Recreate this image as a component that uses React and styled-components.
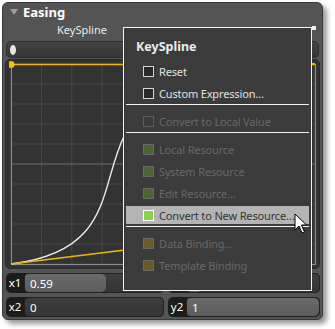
import styled, { createGlobalStyle } from 'styled-components'

const GlobalStyle = createGlobalStyle`
    body {
        margin: 0;
        background: #fff;
        font-family: "Noto Sans", "Liberation Sans", sans-serif;
    }
`

// panel
const Page = styled.div`
    position: relative;
    width: 335px;
    height: 329px;
    padding: 2px;
    box-sizing: border-box;
`
const Panel = styled.div`
    position: relative;
    width: 321px;
    height: 318px;
    box-sizing: border-box;
    padding: 1px 2px 0 2px;
    background: #545454;
    border: 1px solid #3a3a3a;
    border-radius: 6px;
    box-shadow: 4px 4px 5px rgba(0, 0, 0, 0.4);
`
const Header = styled.div`
    display: flex;
    align-items: center;
    gap: 5px;
    height: 16px;
    padding-left: 5px;
    color: #fff;
    font-size: 13px;
    font-weight: 700;
`
const Triangle = styled.span`
    width: 0;
    height: 0;
    border-left: 4px solid transparent;
    border-right: 4px solid transparent;
    border-top: 6px solid #9c9c9c;
`
const Caption = styled.div`
    width: 154px;
    height: 17px;
    line-height: 17px;
    margin-top: 1px;
    text-align: center;
    color: #e6ecf2;
    font-size: 11px;
`
const Track = styled.div`
    display: flex;
    align-items: center;
    height: 15px;
    margin: 3px 1px 0 1px;
    padding-left: 3px;
    background: linear-gradient(#434343, #363636);
    border: 1px solid #2f2f2f;
    border-radius: 5px;
`
const Thumb = styled.span`
    width: 6px;
    height: 10px;
    border-radius: 50%;
    background: #e6e6e6;
`
const GraphBox = styled.div`
    height: 210px;
    margin-top: 1px;
    padding: 1px 3px;
    box-sizing: border-box;
    background: #333;
    border: 1px solid #2a2a2a;
    border-radius: 5px;
`

// fields
const Fields = styled.div`
    display: grid;
    grid-template-columns: 158px 1fr;
    gap: 4px 4px;
    margin: 4px 0 0 1px;
`
const Field = styled.div`
    display: flex;
    height: 20px;
    background: #1c1c1c;
    border-radius: 5px;
    color: #fff;
    font-size: 11.5px;
`
const FieldLabel = styled.span`
    width: 18px;
    line-height: 20px;
    text-align: center;
`
const FieldBar = styled.div`
    position: relative;
    flex: 1;
    display: flex;
    align-items: center;
    padding-left: 5px;
    background: linear-gradient(#3d3d3d, #353535);
    border: 1px solid #222;
    border-radius: 5px;
    overflow: hidden;
`
const FieldFill = styled.span`
    position: absolute;
    left: 0;
    top: 0;
    bottom: 0;
    background: linear-gradient(#6a6a6a, #5c5c5c);
    border-radius: 0 5px 5px 0;
`
const FieldValue = styled.span`
    position: relative;
`

// context menu
const Menu = styled.div`
    position: absolute;
    left: 120px;
    top: 24px;
    width: 189px;
    height: 264px;
    box-sizing: border-box;
    display: flex;
    flex-direction: column;
    background: #3b3b3b;
    border: 1px solid #f2f2f2;
    font-size: 11px;
    letter-spacing: -0.15px;

    &::after {
        content: '';
        position: absolute;
        right: -5px;
        top: -2px;
        width: 4px;
        height: 4px;
        background: #f2f2f2;
    }
`
const MenuTitle = styled.div`
    height: 32px;
    box-sizing: border-box;
    padding: 10px 0 0 12px;
    color: #ececec;
    font-size: 12.5px;
    font-weight: 700;
    letter-spacing: 0;
`
const MenuItem = styled.div`
    display: flex;
    align-items: center;
    gap: 5px;
    height: 18px;
    margin: 2px;
    padding-left: 17px;
    color: ${props => props.hot ? '#353535' : props.off ? '#686868' : '#e2e2e2'};
    background: ${props => props.hot ? '#b4b4b4' : 'transparent'};
`
const Check = styled.span`
    width: 11px;
    height: 11px;
    box-sizing: border-box;
    border: 1px solid ${props => props.edge};
    background: ${props => props.fill};
`
const Separator = styled.div`
    height: 1px;
    margin: 0 2px 5px 2px;
    background: #f2f2f2;
`
const Cursor = styled.svg`
    position: absolute;
    left: 294px;
    top: 213px;
`

const checks = {
    on: ['#d4d4d4', '#2a2a2a'],
    off: ['#5e5e5e', '#3a3a3a'],
    green: ['#686868', '#4c6334'],
    hot: ['#fff', '#8ad24a'],
    olive: ['#686868', '#6a5a26'],
}

const menu = [
    { label: 'Reset', check: 'on' },
    { label: 'Custom Expression...', check: 'on' },
    'sep',
    { label: 'Convert to Local Value', check: 'off', off: true },
    'sep',
    { label: 'Local Resource', check: 'green', off: true },
    { label: 'System Resource', check: 'green', off: true },
    { label: 'Edit Resource...', check: 'green', off: true },
    { label: 'Convert to New Resource...', check: 'hot', hot: true },
    'sep',
    { label: 'Data Binding...', check: 'olive', off: true },
    { label: 'Template Binding', check: 'olive', off: true },
]

const fields = [
    { name: 'x1', value: 0.59 },
    { name: 'y1', value: 0.11 },
    { name: 'x2', value: 0 },
    { name: 'y2', value: 1 },
]

function Graph() {
    const x0 = 2, y0 = 3, w = 304, h = 200
    const px = v => x0 + v * w
    const py = v => y0 + h - v * h
    const cols = Array.from({ length: 11 }, (_, i) => x0 + i * w / 10)
    const rows = Array.from({ length: 11 }, (_, i) => y0 + i * h / 10)
    const p1 = [px(0.59), py(0.11)]
    const p2 = [px(0), py(1)]
    return (
        <svg width='308' height='206'>
            {cols.map((x, i) => (
                <line key={'c' + i} x1={x} y1={y0} x2={x} y2={y0 + h}
                    stroke={i === 5 ? '#6c6c6c' : '#484848'} strokeWidth='1' />
            ))}
            {rows.map((y, i) => (
                <line key={'r' + i} x1={x0} y1={y} x2={x0 + w} y2={y}
                    stroke={i === 5 ? '#6c6c6c' : '#484848'} strokeWidth='1' />
            ))}
            <rect x={x0 + 0.5} y={y0 + 0.5} width={w} height={h} fill='none' stroke='#8e8e8e' />
            <path d={`M${px(0)} ${py(0)} C${p1[0]} ${p1[1]} ${p2[0]} ${p2[1]} ${px(1)} ${py(1)}`}
                fill='none' stroke='#ececec' strokeWidth='1.4' />
            <line x1={px(0)} y1={py(0)} x2={p1[0]} y2={p1[1]} stroke='#f0b800' strokeWidth='1.4' />
            <line x1={px(1)} y1={py(1) + 0.5} x2={p2[0]} y2={p2[1] + 0.5} stroke='#f0b800' strokeWidth='1.4' />
            <circle cx={p1[0]} cy={p1[1]} r='3.5' fill='#f5c400' />
            <circle cx={p2[0]} cy={p2[1] + 0.5} r='3.5' fill='#f5c400' />
        </svg>
    )
}

export default function App() {
    return (
        <Page>
            <GlobalStyle />
            <Panel>
                <Header>
                    <Triangle />
                    Easing
                </Header>
                <Caption>KeySpline</Caption>
                <Track>
                    <Thumb />
                </Track>
                <GraphBox>
                    <Graph />
                </GraphBox>
                <Fields>
                    {fields.map(f => (
                        <Field key={f.name}>
                            <FieldLabel>{f.name}</FieldLabel>
                            <FieldBar>
                                <FieldFill style={{ width: `${f.value * 100}%` }} />
                                <FieldValue>{f.value}</FieldValue>
                            </FieldBar>
                        </Field>
                    ))}
                </Fields>
                <Menu>
                    <MenuTitle>KeySpline</MenuTitle>
                    {menu.map((item, i) =>
                        item === 'sep' ? (
                            <Separator key={i} />
                        ) : (
                            <MenuItem key={i} off={item.off} hot={item.hot}>
                                <Check edge={checks[item.check][0]} fill={checks[item.check][1]} />
                                {item.label}
                            </MenuItem>
                        )
                    )}
                </Menu>
            </Panel>
            <Cursor width='14' height='22' viewBox='0 0 14 22'>
                <path d='M1 1 L1 17 L5 13 L8 20 L10.5 19 L7.5 12 L12.5 12 Z'
                    fill='#fff' stroke='#000' strokeWidth='1' strokeLinejoin='round' />
            </Cursor>
        </Page>
    )
}
